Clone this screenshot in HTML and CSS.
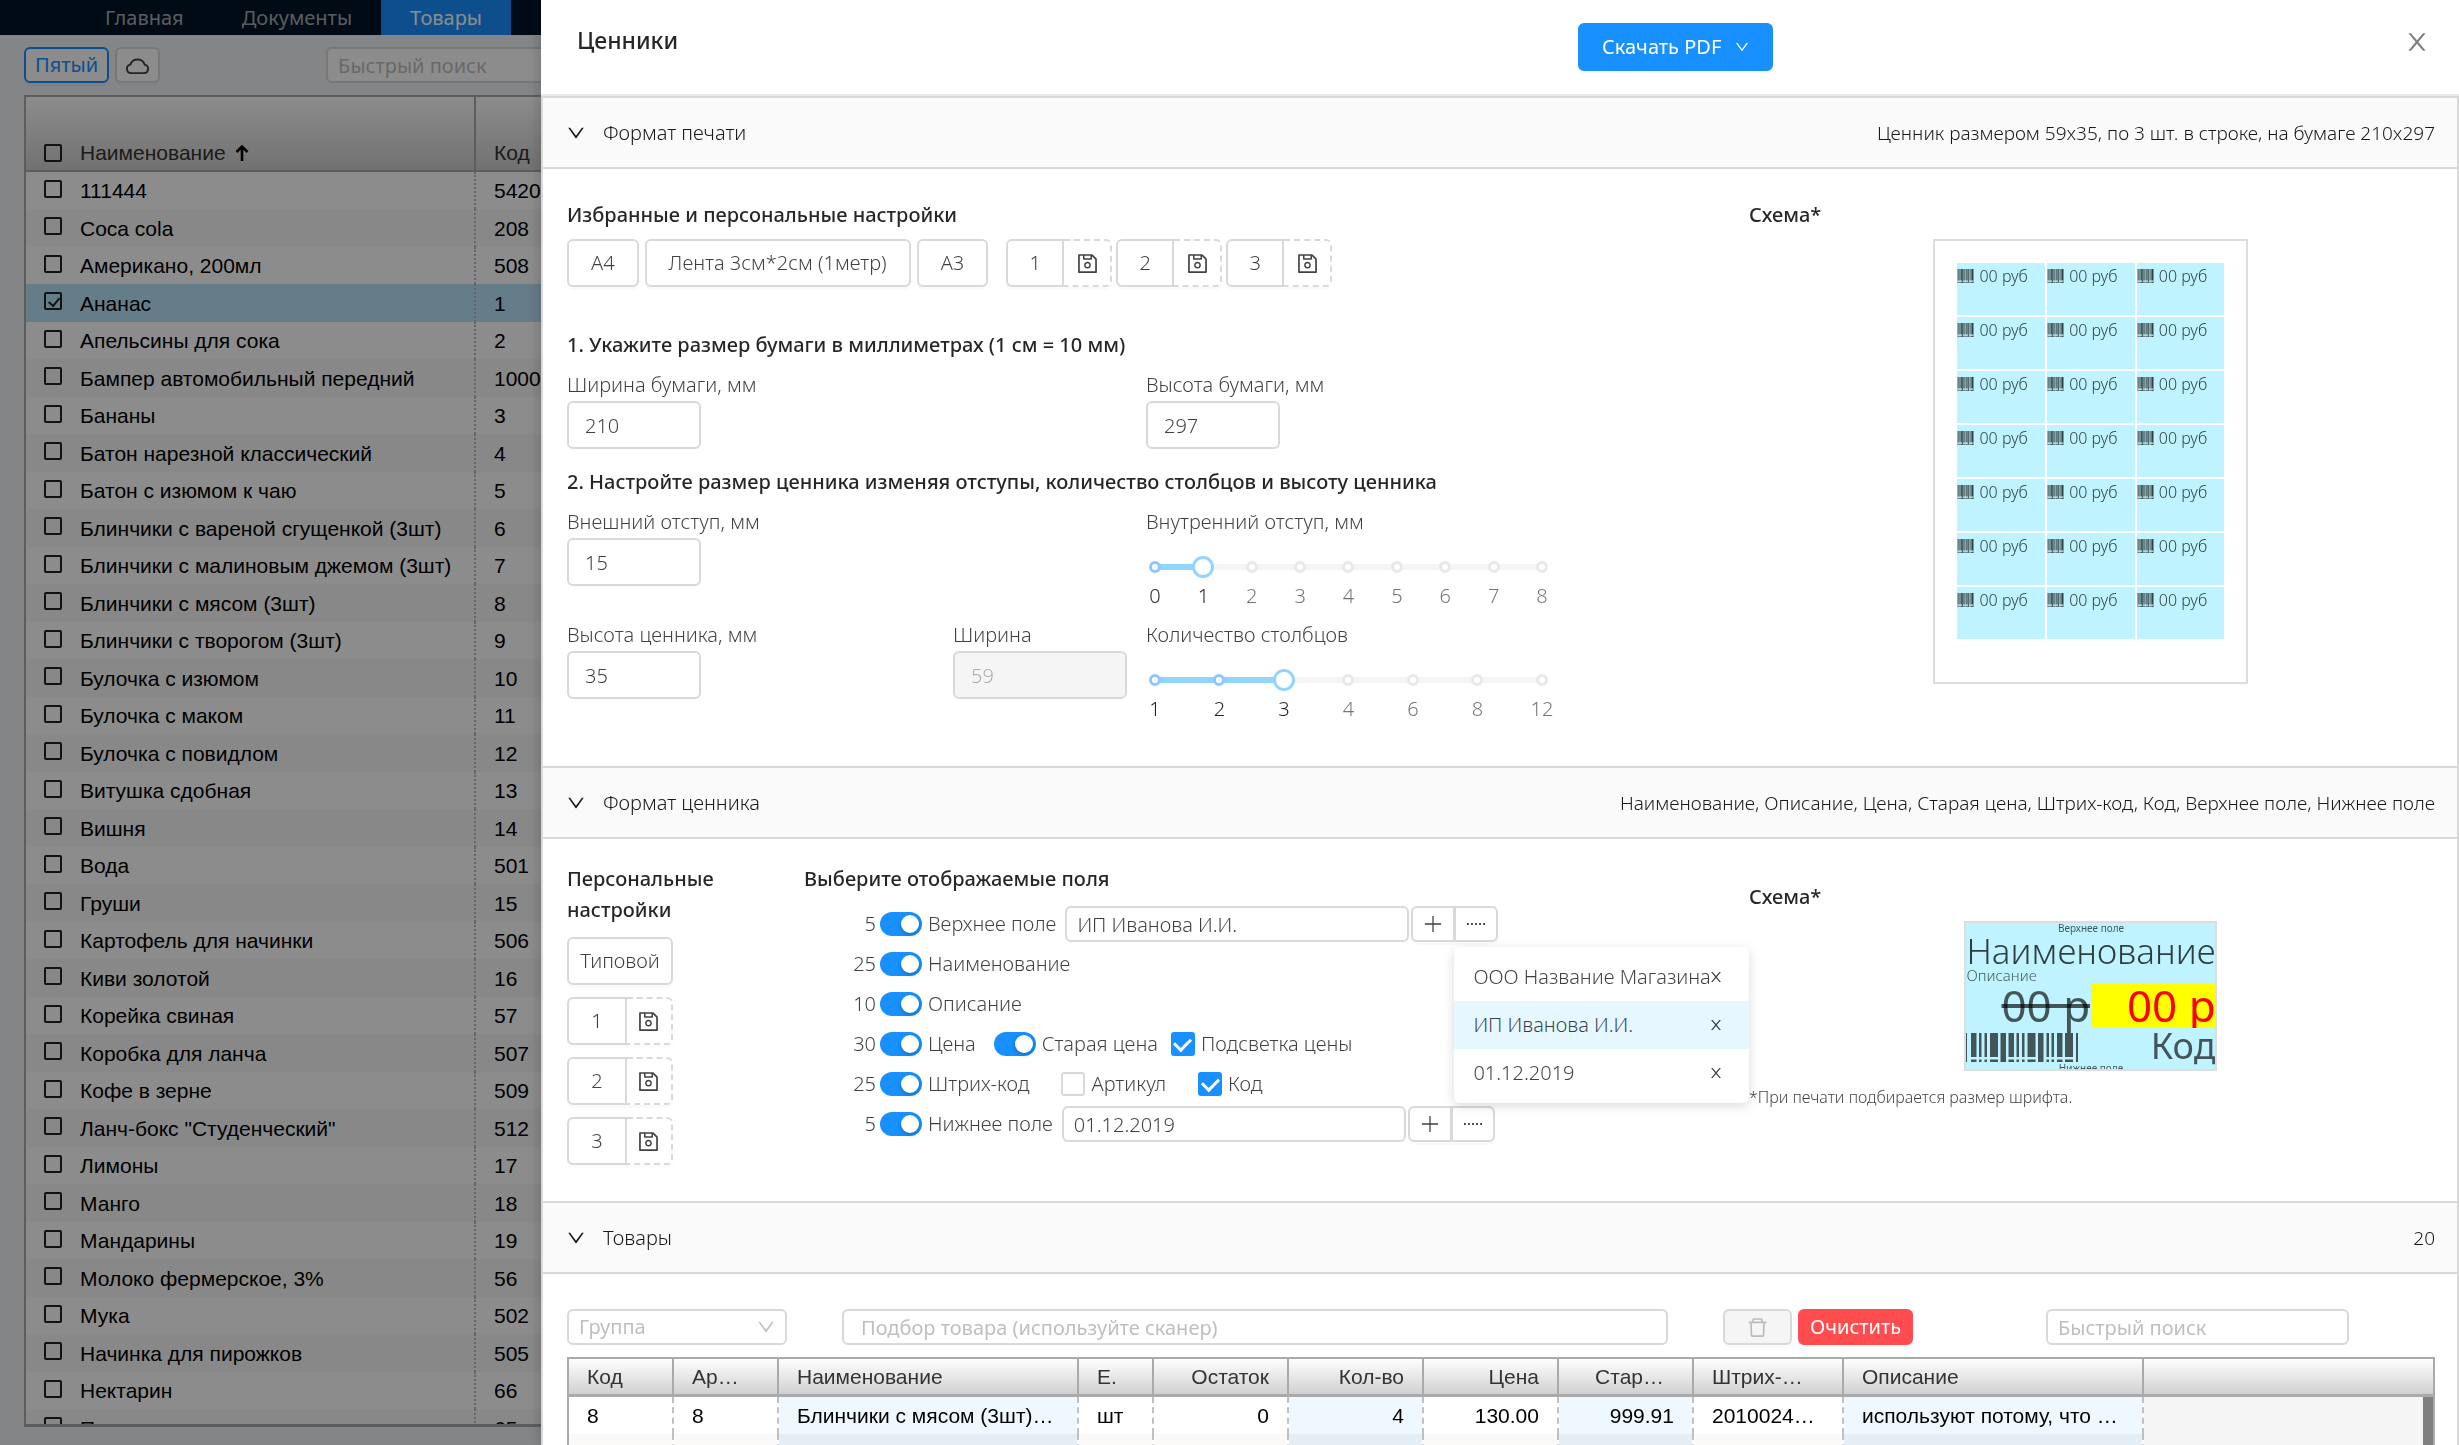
FILE: index.html
```
<!DOCTYPE html>
<html lang="ru">
<head>
<meta charset="utf-8">
<title>Ценники</title>
<link rel="stylesheet" href="styles.css">
</head>
<body>
<svg class="sprite" aria-hidden="true">
  <symbol id="i-save" viewBox="64 64 896 896"><path d="M893.3 293.3L730.7 130.7c-7.5-7.5-16.7-13-26.7-16V112H144c-17.7 0-32 14.3-32 32v736c0 17.7 14.3 32 32 32h736c17.7 0 32-14.3 32-32V338.5c0-17-6.7-33.2-18.7-45.2zM384 184h256v104H384V184zm456 656H184V184h136v136c0 17.7 14.3 32 32 32h320c17.7 0 32-14.3 32-32V205.8l136 136V840zM512 442c-79.5 0-144 64.5-144 144s64.5 144 144 144 144-64.5 144-144-64.5-144-144-144zm0 224c-44.2 0-80-35.8-80-80s35.8-80 80-80 80 35.8 80 80-35.8 80-80 80z"/></symbol>
  <symbol id="i-down" viewBox="64 64 896 896"><path d="M884 256h-75c-5.1 0-9.9 2.5-12.9 6.6L512 654.2 227.9 262.6c-3-4.1-7.8-6.6-12.9-6.6h-75c-6.5 0-10.3 7.4-6.5 12.7l352.6 486.1c12.8 17.6 39 17.6 51.7 0l352.6-486.1c3.9-5.3.1-12.7-6.4-12.7z"/></symbol>
  <symbol id="i-close" viewBox="64 64 896 896"><path d="M563.8 512l262.5-312.9c4.4-5.2.7-13.1-6.1-13.1h-79.8c-4.7 0-9.2 2.1-12.3 5.7L511.6 449.8 295.1 191.7c-3-3.6-7.5-5.7-12.3-5.7H203c-6.8 0-10.5 7.9-6.1 13.1L459.4 512 196.9 824.9A7.95 7.95 0 0 0 203 838h79.8c4.7 0 9.2-2.1 12.3-5.7l216.5-258.1 216.5 258.1c3 3.6 7.5 5.7 12.3 5.7h79.8c6.8 0 10.5-7.9 6.1-13.1L563.8 512z"/></symbol>
  <symbol id="i-delete" viewBox="64 64 896 896"><path d="M360 184h-8c4.4 0 8-3.6 8-8v8h304v-8c0 4.4 3.6 8 8 8h-8v72h72v-80c0-35.3-28.7-64-64-64H352c-35.3 0-64 28.7-64 64v80h72v-72zm504 72H160c-17.7 0-32 14.3-32 32v32c0 4.4 3.6 8 8 8h60.4l24.7 523c1.6 34.1 29.8 61 63.9 61h454c34.2 0 62.3-26.8 63.9-61l24.7-523H888c4.4 0 8-3.6 8-8v-32c0-17.7-14.3-32-32-32zM731.3 840H292.7l-24.2-512h487l-24.2 512z"/></symbol>
  <symbol id="i-cloud" viewBox="0 0 24 24"><path d="M6.2 19.3h11.6a4.1 4.1 0 0 0 1.1-8.1 7.3 7.3 0 0 0-13.8 0 4.1 4.1 0 0 0 1.1 8.1z" fill="none" stroke="currentColor" stroke-width="1.8"/></symbol>
  <symbol id="i-plus" viewBox="0 0 20 20"><path d="M10 1v18M1 10h18" fill="none" stroke="currentColor" stroke-width="1.4"/></symbol>
  <symbol id="i-dots" viewBox="0 0 20 20"><path d="M0 9h2v2H0zM4.500 9h2v2h-2zM9 9h2v2H9zM13.500 9h2v2h-2zM18 9h2v2h-2z"/></symbol>
  <symbol id="i-sort" viewBox="0 0 14 18"><path d="M7 17V3M1.500 8L7 2.500 12.500 8" fill="none" stroke="currentColor" stroke-width="2.600"/></symbol>
  <symbol id="i-barcode" viewBox="0 0 112 29" preserveAspectRatio="none">
    <path d="M0 0h1v29H0zM34.500 0h5.500v29h-5.500zM72 0h5.500v29H72zM110 0h2v29h-2z"/>
    <path d="M5 0h5.500v24H5zM13 0h2.500v24H13zM18.500 0H21v24h-2.500zM24 0h8v24h-8zM42.500 0H48v24h-5.500zM50.500 0h2.500v24h-2.500zM56 0h2.500v24H56zM61.500 0h8v24h-8zM80.500 0h2.500v24h-2.500zM85.500 0H88v24h-2.500zM91 0h5.500v24H91zM99 0h8v24h-8z"/>
    <path d="M5 26.500h5.500V29H5zM13 26.500h2.500V29H13zM18.500 26.500H21V29h-2.500zM24 26.500h8V29h-8zM42.500 26.500H48V29h-5.500zM50.500 26.500h2.500V29h-2.500zM56 26.500h2.500V29H56zM61.500 26.500h8V29h-8zM80.500 26.500h2.500V29h-2.500zM85.500 26.500H88V29h-2.500zM91 26.500h5.500V29H91zM99 26.500h8V29h-8z"/>
  </symbol>
</svg>

<div class="app">
  <nav class="nav">
    <a href="#">Главная</a>
    <a href="#">Документы</a>
    <a href="#" class="active">Товары</a>
  </nav>
  <div class="page-tools">
    <button type="button" class="btn small primary-ghost">Пятый</button>
    <button type="button" class="btn small cloud" aria-label="Облако"><svg class="icon"><use href="#i-cloud"/></svg></button>
    <input class="field small page-search" type="text" placeholder="Быстрый поиск" aria-label="Быстрый поиск по каталогу">
  </div>
  <div class="catalog">
    <table>
      <thead>
        <tr><th class="name"><label><input type="checkbox" class="tick"><span>Наименование</span><svg class="sort"><use href="#i-sort"/></svg></label></th><th>Код</th></tr>
      </thead>
      <tbody id="catalog-rows"></tbody>
    </table>
  </div>
</div>
<div class="mask"></div>

<section class="drawer" role="dialog" aria-labelledby="drawer-title">
  <header class="drawer-head">
    <h1 id="drawer-title">Ценники</h1>
    <button type="button" class="btn primary">Скачать PDF<svg class="caret"><use href="#i-down"/></svg></button>
    <button type="button" class="close" aria-label="Закрыть"><svg><use href="#i-close"/></svg></button>
  </header>

  <div class="collapse">
    <button type="button" class="panel-head"><svg><use href="#i-down"/></svg><span>Формат печати</span><span class="summary">Ценник размером 59x35, по 3 шт. в строке, на бумаге 210x297</span></button>
    <div class="panel-body split print-format">
      <div class="main">
        <h2>Избранные и персональные настройки</h2>
        <div class="presets">
          <button type="button" class="btn">A4</button>
          <button type="button" class="btn">Лента 3см*2см (1метр)</button>
          <button type="button" class="btn">A3</button>
          <div class="slots">
            <div class="slot"><button type="button" class="btn">1</button><button type="button" class="btn save" aria-label="Сохранить 1"><svg class="icon"><use href="#i-save"/></svg></button></div>
            <div class="slot"><button type="button" class="btn">2</button><button type="button" class="btn save" aria-label="Сохранить 2"><svg class="icon"><use href="#i-save"/></svg></button></div>
            <div class="slot"><button type="button" class="btn">3</button><button type="button" class="btn save" aria-label="Сохранить 3"><svg class="icon"><use href="#i-save"/></svg></button></div>
          </div>
        </div>
        <h2 class="step">1. Укажите размер бумаги в миллиметрах (1 см = 10 мм)</h2>
        <div class="params">
          <div class="param"><label for="pw">Ширина бумаги, мм</label><input id="pw" class="field num" type="text" value="210"></div>
          <div class="param wide"><label for="ph">Высота бумаги, мм</label><input id="ph" class="field num" type="text" value="297"></div>
        </div>
        <h2 class="step next">2. Настройте размер ценника изменяя отступы, количество столбцов и высоту ценника</h2>
        <div class="params">
          <div class="param"><label for="om">Внешний отступ, мм</label><input id="om" class="field num" type="text" value="15"></div>
          <div class="param wide"><label for="im">Внутренний отступ, мм</label>
            <div class="slider">
              <div class="rail" style="--fill:12.5%"><i class="on"></i><i class="on"></i><i></i><i></i><i></i><i></i><i></i><i></i><i></i></div>
              <input id="im" type="range" min="0" max="8" value="1">
              <div class="marks"><b>0</b><b>1</b><span>2</span><span>3</span><span>4</span><span>5</span><span>6</span><span>7</span><span>8</span></div>
            </div>
          </div>
          <div class="param"><label for="th">Высота ценника, мм</label><input id="th" class="field num" type="text" value="35"></div>
          <div class="param"><label for="tw">Ширина</label><input id="tw" class="field" type="text" value="59" disabled></div>
          <div class="param"><label for="cols">Количество столбцов</label>
            <div class="slider">
              <div class="rail" style="--fill:33%"><i class="on"></i><i class="on"></i><i class="on"></i><i></i><i></i><i></i><i></i></div>
              <input id="cols" type="range" min="0" max="6" value="2">
              <div class="marks"><b>1</b><b>2</b><b>3</b><span>4</span><span>6</span><span>8</span><span>12</span></div>
            </div>
          </div>
        </div>
      </div>
      <div class="aside">
        <h2>Схема*</h2>
        <div class="sheet" id="sheet"></div>
      </div>
    </div>

    <button type="button" class="panel-head"><svg><use href="#i-down"/></svg><span>Формат ценника</span><span class="summary">Наименование, Описание, Цена, Старая цена, Штрих-код, Код, Верхнее поле, Нижнее поле</span></button>
    <div class="panel-body split tag-format">
      <div class="main tag-setup">
        <div class="personal">
          <h2>Персональные настройки</h2>
          <button type="button" class="btn typical">Типовой</button>
          <div class="slot"><button type="button" class="btn">1</button><button type="button" class="btn save" aria-label="Сохранить 1"><svg class="icon"><use href="#i-save"/></svg></button></div>
          <div class="slot"><button type="button" class="btn">2</button><button type="button" class="btn save" aria-label="Сохранить 2"><svg class="icon"><use href="#i-save"/></svg></button></div>
          <div class="slot"><button type="button" class="btn">3</button><button type="button" class="btn save" aria-label="Сохранить 3"><svg class="icon"><use href="#i-save"/></svg></button></div>
        </div>
        <div class="fields">
          <h2>Выберите отображаемые поля</h2>
          <div class="line"><span class="qty">5</span><label><input type="checkbox" class="switch" checked>Верхнее поле</label>
            <input class="field small text" type="text" value="ИП Иванова И.И." aria-label="Текст верхнего поля">
            <div class="pair"><button type="button" class="btn small" aria-label="Добавить"><svg class="plus"><use href="#i-plus"/></svg></button><div class="anchor"><button type="button" class="btn small" aria-label="Ещё"><svg class="plus"><use href="#i-dots"/></svg></button>
              <ul class="menu">
                <li>ООО Название Магазина<button type="button" aria-label="Удалить"><svg><use href="#i-close"/></svg></button></li>
                <li class="current">ИП Иванова И.И.<button type="button" aria-label="Удалить"><svg><use href="#i-close"/></svg></button></li>
                <li>01.12.2019<button type="button" aria-label="Удалить"><svg><use href="#i-close"/></svg></button></li>
              </ul></div></div>
          </div>
          <div class="line"><span class="qty">25</span><label><input type="checkbox" class="switch" checked>Наименование</label></div>
          <div class="line"><span class="qty">10</span><label><input type="checkbox" class="switch" checked>Описание</label></div>
          <div class="line"><span class="qty">30</span><label><input type="checkbox" class="switch" checked>Цена</label><label class="old"><input type="checkbox" class="switch" checked>Старая цена</label><label class="opt"><input type="checkbox" class="check" checked>Подсветка цены</label></div>
          <div class="line"><span class="qty">25</span><label><input type="checkbox" class="switch" checked>Штрих-код</label><label class="opt far"><input type="checkbox" class="check">Артикул</label><label class="opt far"><input type="checkbox" class="check" checked>Код</label></div>
          <div class="line"><span class="qty">5</span><label><input type="checkbox" class="switch" checked>Нижнее поле</label>
            <input class="field small text" type="text" value="01.12.2019" aria-label="Текст нижнего поля">
            <div class="pair"><button type="button" class="btn small" aria-label="Добавить"><svg class="plus"><use href="#i-plus"/></svg></button><button type="button" class="btn small" aria-label="Ещё"><svg class="plus"><use href="#i-dots"/></svg></button></div>
          </div>
        </div>
      </div>
      <div class="aside">
        <h2>Схема*</h2>
        <div class="tag">
          <div class="tag-note">Верхнее поле</div>
          <div class="tag-name">Наименование</div>
          <div class="tag-desc">Описание</div>
          <div class="tag-prices"><s>00 р</s><span class="hot">00 р</span></div>
          <div class="tag-code"><svg><use href="#i-barcode"/></svg><span>Код</span></div>
          <div class="tag-note">Нижнее поле</div>
        </div>
        <p class="hint">*При печати подбирается размер шрифта.</p>
      </div>
    </div>

    <button type="button" class="panel-head"><svg><use href="#i-down"/></svg><span>Товары</span><span class="summary">20</span></button>
    <div class="panel-body goods">
      <div class="goods-tools">
        <div class="select"><select class="field small" aria-label="Группа"><option>Группа</option></select><svg><use href="#i-down"/></svg></div>
        <input class="field small pick" type="text" placeholder="Подбор товара (используйте сканер)" aria-label="Подбор товара">
        <div class="actions"><button type="button" class="btn small trash" disabled aria-label="Удалить выбранное"><svg class="icon"><use href="#i-delete"/></svg></button><button type="button" class="btn small danger">Очистить</button></div>
        <input class="field small quick" type="text" placeholder="Быстрый поиск" aria-label="Быстрый поиск">
      </div>
      <div class="goods-grid">
        <table>
          <colgroup><col class="w104"><col class="w105"><col class="w300"><col class="w75"><col class="w135"><col class="w135"><col class="w135"><col class="w135"><col class="w150"><col class="w300"><col></colgroup>
          <thead><tr><th>Код</th><th>Ар…</th><th>Наименование</th><th>Е.</th><th class="r">Остаток</th><th class="r">Кол-во</th><th class="r">Цена</th><th class="r cut">Стар…</th><th>Штрих-…</th><th>Описание</th><th></th></tr></thead>
          <tbody>
            <tr><td>8</td><td>8</td><td class="edit">Блинчики с мясом (3шт) …</td><td>шт</td><td class="r">0</td><td class="r edit">4</td><td class="r">130.00</td><td class="r edit">999.91</td><td>2010024…</td><td class="edit">используют потому, что …</td><td class="rest"></td></tr>
            <tr><td>9</td><td>9</td><td class="edit">Блинчики с творогом (3шт)</td><td>шт</td><td class="r">10</td><td class="r edit">5</td><td class="r">100.00</td><td class="r edit">100100…</td><td>2010029…</td><td class="edit">Изъбранное №30 Изъб…</td><td class="rest"></td></tr>
          </tbody>
        </table>
        <div class="scroll"></div>
      </div>
    </div>
  </div>
</section>
<script src="app.js"></script>
</body>
</html>
```
FILE: styles.css
```
* { box-sizing: border-box; }
body {
  margin: 0;
  height: 100vh;
  overflow: hidden;
  background: #f0f2f5;
  color: rgba(0, 0, 0, .75);
  font: 300 20px/32px "Noto Sans", "Open Sans", sans-serif;
}
button, input, select { font: inherit; color: inherit; margin: 0; }
button { cursor: pointer; }
svg { fill: currentColor; }
h1, h2, p, ul { margin: 0; padding: 0; }
h2 { font-size: 20px; line-height: 32px; font-weight: 500; color: rgba(0, 0, 0, .85); }
.sprite { display: none; }

/* shared controls */
.btn {
  display: inline-flex;
  align-items: center;
  justify-content: center;
  height: 48px;
  padding: 0 22px;
  background: #fff;
  border: 2px solid #d9d9d9;
  border-radius: 6px;
  box-shadow: 0 3px 0 rgba(0, 0, 0, .02);
  white-space: nowrap;
}
.btn.small, .field.small { height: 36px; }
.btn .icon { width: 21px; height: 21px; }
.btn.primary, .btn.danger { color: #fff; font-weight: 400; }
.btn.primary { background: #1890ff; border-color: #1890ff; gap: 14px; }
.btn.danger { background: #ff4d4f; border-color: #ff4d4f; padding: 0 10px; }
.caret { width: 14px; height: 14px; }
.field {
  height: 48px;
  width: 100%;
  padding: 0 16px;
  background: #fff;
  border: 2px solid #d9d9d9;
  border-radius: 6px;
}
.field.small { padding: 0 10px; }
.field.num { width: 134px; }
.field:disabled { background: #f5f5f5; color: rgba(0, 0, 0, .3); }
.field::placeholder { color: #bfbfbf; font-weight: 400; opacity: 1; }

/* page under the drawer */
.app { display: flex; flex-direction: column; height: 100vh; padding-bottom: 18px; }
.nav { display: flex; background: #001529; padding-left: 76px; }
.nav a {
  padding: 0 29px;
  line-height: 35px;
  font-weight: 400;
  color: rgba(255, 255, 255, .65);
  text-decoration: none;
}
.nav .active { background: #1890ff; color: #fff; }
.page-tools { display: flex; gap: 6px; padding: 12px 24px; }
.primary-ghost { padding: 0 9px; color: #1890ff; border-color: #1890ff; font-weight: 400; }
.cloud { width: 45px; padding: 0; }
.page-tools .page-search { width: 400px; margin-left: 160px; }
.btn.cloud .icon { width: 25px; height: 25px; }
.catalog {
  flex: 1;
  min-height: 0;
  overflow: hidden;
  margin: 0 24px;
  background: #fff;
  border: 2px solid #aaa;
  border-bottom-width: 3px;
  font: 400 21px/37px "Liberation Sans", Arial, sans-serif;
  color: #000;
}
table { width: 100%; border-collapse: collapse; table-layout: fixed; }
th { font-weight: 400; text-align: left; color: #333; }
.catalog th, .catalog td { padding: 0 18px; }
.catalog th { height: 74px; vertical-align: bottom; line-height: 34px; background: linear-gradient(#fff, #cfcfcf); border-bottom: 2px solid #aaa; }
.catalog .name { width: 449px; border-right: 2px solid #aaa; }
.catalog td.name { border-right: 2px dotted #bbb; }
.catalog td { height: 37px; }
.catalog tbody tr:nth-child(even) td { height: 38px; background: #f7f7f7; }
.catalog tbody tr.picked td { background: #b9e4f9; }
.catalog label { display: flex; align-items: center; gap: 18px; }
.tick {
  appearance: none;
  display: grid;
  place-items: center;
  width: 18px;
  height: 18px;
  border: 2px solid #222;
  border-radius: 2px;
}
td .tick { margin-bottom: 4px; }
.tick:checked::before {
  content: "";
  width: 5px;
  height: 9px;
  border: solid #222;
  border-width: 0 2px 2px 0;
  transform: rotate(40deg) translateY(-1px);
}
.sort { width: 14px; height: 18px; margin-left: -9px; color: #000; }

.mask { position: fixed; inset: 0; background: rgba(0, 0, 0, .45); }

/* drawer */
.drawer {
  position: fixed;
  top: 0;
  right: 0;
  bottom: 0;
  width: 78%;
  overflow: hidden;
  background: #fff;
  box-shadow: -3px 0 12px rgba(0, 0, 0, .15);
}
.drawer-head {
  display: grid;
  grid-template-columns: 1001px auto 1fr;
  align-items: start;
  padding: 23px 30px 23px 36px;
  border-bottom: 2px solid #e8e8e8;
}
.drawer-head h1 { font-size: 23px; line-height: 34px; font-weight: 500; color: rgba(0, 0, 0, .85); }
.close { justify-self: end; padding: 7px 0; background: none; border: 0; color: rgba(0, 0, 0, .5); }
.close svg { display: block; width: 24px; height: 24px; }

.collapse { border: solid #d9d9d9; border-width: 0 2px; }
.panel-head {
  display: flex;
  align-items: center;
  gap: 18px;
  width: 100%;
  height: 73px;
  padding: 0 22px 0 24px;
  background: #fafafa;
  border: solid #d9d9d9;
  border-width: 2px 0;
  text-align: left;
  color: rgba(0, 0, 0, .9);
}
.panel-head svg { width: 18px; height: 18px; }
.panel-head .summary { margin-left: auto; font-size: 19px; }
.panel-body { padding: 24px; }
.split { display: grid; grid-template-columns: 1158fr 684fr; gap: 24px; }

/* print format */
.print-format { padding-top: 30px; padding-bottom: 41px; }
.presets { display: flex; gap: 6px; padding-top: 8px; }
.slots { display: flex; gap: 4px; margin-left: 12px; }
.slot { display: flex; }
.slot .btn:first-child { width: 58px; padding: 0; border-radius: 6px 0 0 6px; }
.slot .btn.save { width: 48px; padding: 0; border-style: dashed; border-left: 0; border-radius: 0 6px 6px 0; }
.step { margin-top: 42px; }
.step.next { margin-top: 17px; }
.params { display: grid; grid-template-columns: 386fr 181fr 12fr 579fr; padding-top: 8px; row-gap: 7px; }
.param { display: grid; justify-items: start; align-content: start; }
.param:nth-child(1), .param:nth-child(3) { grid-column: 1; }
.param:nth-child(4) { grid-column: 2; }
.param:nth-child(4) .field { width: 174px; }
.param:nth-child(5), .param.wide { grid-column: 4; }
.slider { width: 405px; max-width: 100%; padding-top: 18px; display: grid; grid-template-columns: 100%; }
.slider input, .rail { grid-area: 1 / 1; height: 22px; }
.rail {
  display: flex;
  justify-content: space-between;
  align-items: center;
  padding: 0 3px;
  background: linear-gradient(to right, #91d5ff var(--fill), #f5f5f5 var(--fill)) center / calc(100% - 18px) 6px no-repeat;
}
.rail i { width: 12px; height: 12px; border: 3px solid #e8e8e8; border-radius: 50%; background: #fff; }
.rail .on { border-color: #8cc8ff; }
.slider input { appearance: none; width: calc(100% + 4px); margin: 0 -2px; background: none; }
.slider input::-webkit-slider-thumb {
  appearance: none;
  width: 22px;
  height: 22px;
  border: 3px solid #91d5ff;
  border-radius: 50%;
  background: #fff;
}
.marks { display: flex; justify-content: space-between; margin: 2px -3px 0; color: rgba(0, 0, 0, .55); }
.marks > * { width: 24px; text-align: center; font-weight: 300; }
.marks b { color: rgba(0, 0, 0, .85); }

.sheet {
  display: grid;
  grid-template-columns: repeat(3, 1fr);
  grid-auto-rows: 52px;
  gap: 2px;
  width: 315px;
  height: 445px;
  margin: 8px auto 0;
  padding: 22px;
  border: 2px solid #ddd;
}
.sheet div { display: flex; gap: 5px; background: #bef3ff; font-size: 16px; line-height: 26px; white-space: nowrap; }
.sheet svg { width: 17px; height: 14px; margin-top: 6px; }

/* tag format */
.tag-format { padding-bottom: 36px; }
.tag-setup { display: grid; grid-template-columns: 237px 1fr; }
.personal { display: grid; grid-template-columns: 106px; gap: 12px; align-content: start; }
.personal h2 { width: 170px; line-height: 31px; }
.typical { padding: 0; }
.personal .slot .btn:first-child { width: 60px; }
.personal .slot .btn.save { width: 46px; }
.fields h2 { margin-bottom: 9px; }
.line { display: flex; align-items: center; height: 40px; }
.line label { display: flex; align-items: center; gap: 6px; }
.qty { width: 72px; margin-right: 4px; text-align: right; }
.switch {
  appearance: none;
  display: flex;
  width: 42px;
  height: 24px;
  padding: 3px;
  border-radius: 12px;
  background: #1890ff;
}
.switch::before { content: ""; width: 18px; height: 18px; margin-left: auto; border-radius: 50%; background: #fff; box-shadow: 0 2px 4px rgba(0, 35, 11, .3); }
.check {
  appearance: none;
  display: grid;
  place-items: center;
  width: 24px;
  height: 24px;
  border: 2px solid #d9d9d9;
  border-radius: 3px;
  background: #fff;
}
.check:checked { background: #1890ff; border-color: #1890ff; }
.check:checked::before { content: ""; width: 8px; height: 13px; border: solid #fff; border-width: 0 3px 3px 0; transform: rotate(45deg) translate(-1px, -1px); }
.line .old { margin-left: 18px; }
.line .opt { margin-left: 13px; }
.line .opt.far { margin-left: 32px; }
.field.text { width: 344px; margin: 0 2px 0 9px; }
.pair { display: flex; }
.pair .btn { width: 44px; padding: 0; border-radius: 6px 0 0 6px; }
.pair > :last-child, .pair .anchor .btn { border-radius: 0 6px 6px 0; }
.pair > :last-child { margin-left: -1px; }
.plus { width: 18px; height: 18px; color: #000; opacity: .75; }
.anchor { position: relative; }
.menu {
  position: absolute;
  z-index: 1;
  top: 41px;
  left: 0;
  width: 295px;
  padding: 6px 0;
  list-style: none;
  background: #fff;
  border-radius: 6px;
  box-shadow: 0 3px 12px rgba(0, 0, 0, .15);
}
.menu li { display: flex; align-items: center; height: 48px; padding-left: 19px; white-space: nowrap; position: relative; }
.menu .current { background: #e6f7ff; }
.menu button { position: absolute; right: 26px; padding: 0; border: 0; background: none; line-height: 0; }
.menu svg { width: 14px; height: 14px; }

.tag-format .aside h2 { padding-top: 18px; }
.tag {
  width: 253px;
  height: 150px;
  margin: 8px auto 0;
  overflow: hidden;
  background: #bef3ff;
  border: 2px solid #ddd;
  font-weight: 400;
  color: rgba(0, 0, 0, .65);
  white-space: nowrap;
}
.tag-note { font-size: 10px; line-height: 10px; text-align: center; }
.tag-name { font-size: 35px; line-height: 35px; font-weight: 300; color: rgba(0, 0, 0, .75); }
.tag-desc { font-size: 15px; line-height: 15px; font-weight: 300; }
.tag-prices { display: flex; justify-content: flex-end; font-size: 44px; line-height: 45px; }
.hot { width: 50%; margin-left: 1px; background: #ff0; color: #f00; text-align: right; overflow: hidden; }
.tag-code { display: flex; justify-content: space-between; font-size: 36px; line-height: 35px; }
.tag-code svg { width: 112px; height: 29px; margin-top: 5px; }
.hint { margin-top: 12px; font-size: 16px; line-height: 28px; }

/* goods */
.goods { padding: 35px 22px 0 24px; }
.goods-tools { display: grid; grid-template-columns: 220px 826px auto 303px; gap: 55px; align-items: center; margin-right: 86px; }
.select { position: relative; }
.select .field { appearance: none; color: #bfbfbf; font-weight: 400; }
.select svg { position: absolute; right: 12px; top: 9px; width: 18px; height: 18px; color: #bfbfbf; }
.field.pick { padding: 0 17px; }
.actions { display: flex; gap: 6px; margin-right: 76px; }
.btn.trash { width: 69px; background: #f5f5f5; color: #bbb; }
.goods-grid {
  display: grid;
  margin-top: 12px;
  border: 2px solid #aaa;
  font: 400 21px/37px "Liberation Sans", Arial, sans-serif;
  color: #000;
}
.goods-grid table, .scroll { grid-area: 1 / 1; }
.scroll { justify-self: end; width: 10px; margin-top: 38px; background: #808080; }
.goods-grid th, .goods-grid td { padding: 0 18px; overflow: hidden; text-overflow: ellipsis; white-space: nowrap; }
.goods-grid th { background: linear-gradient(#fff, #d0d0d0); border-bottom: 3px solid #aaa; border-right: 2px solid #aaa; line-height: 35px; }
.goods-grid td { border-right: 2px dashed #c0c0c0; }
.goods-grid th:last-child, .goods-grid td.rest { border-right: 0; }
.goods-grid tr:nth-child(even) td { background: #faf9f8; }
.goods-grid td.edit { background: #f0f8ff; }
.goods-grid tr:nth-child(even) td.edit { background: #e6eef5; }
.goods-grid tr td.rest, .goods-grid tr:nth-child(even) td.rest { background: #f5f5f5; }
.goods-grid .r { text-align: right; }
.goods-grid .cut { padding-right: 28px; }
.w75 { width: 75px; }
.w104 { width: 104px; }
.w105 { width: 105px; }
.w135 { width: 135px; }
.w150 { width: 150px; }
.w300 { width: 300px; }
```
FILE: app.js
```
const catalog = [
  ["111444", "5420"], ["Coca cola", "208"], ["Американо, 200мл", "508"], ["Ананас", "1"],
  ["Апельсины для сока", "2"], ["Бампер автомобильный передний", "1000"], ["Бананы", "3"],
  ["Батон нарезной классический", "4"], ["Батон с изюмом к чаю", "5"],
  ["Блинчики с вареной сгущенкой (3шт)", "6"], ["Блинчики с малиновым джемом (3шт)", "7"],
  ["Блинчики с мясом (3шт)", "8"], ["Блинчики с творогом (3шт)", "9"], ["Булочка с изюмом", "10"],
  ["Булочка с маком", "11"], ["Булочка с повидлом", "12"], ["Витушка сдобная", "13"],
  ["Вишня", "14"], ["Вода", "501"], ["Груши", "15"], ["Картофель для начинки", "506"],
  ["Киви золотой", "16"], ["Корейка свиная", "57"], ["Коробка для ланча", "507"],
  ["Кофе в зерне", "509"], ["Ланч-бокс \"Студенческий\"", "512"], ["Лимоны", "17"],
  ["Манго", "18"], ["Мандарины", "19"], ["Молоко фермерское, 3%", "56"], ["Мука", "502"],
  ["Начинка для пирожков", "505"], ["Нектарин", "66"], ["Перец", "65"]
];

const rows = document.getElementById("catalog-rows");
for (const [name, code] of catalog) {
  const tr = rows.insertRow();
  const picked = name === "Ананас";
  if (picked) tr.className = "picked";
  tr.innerHTML = '<td class="name"><label><input type="checkbox" class="tick"' +
    (picked ? " checked" : "") + "><span></span></label></td><td></td>";
  tr.querySelector("span").textContent = name;
  tr.cells[1].textContent = code;
}

const sheet = document.getElementById("sheet");
for (let i = 0; i < 21; i++) {
  const cell = document.createElement("div");
  cell.innerHTML = '<svg><use href="#i-barcode"/></svg>00 руб';
  sheet.append(cell);
}
```
